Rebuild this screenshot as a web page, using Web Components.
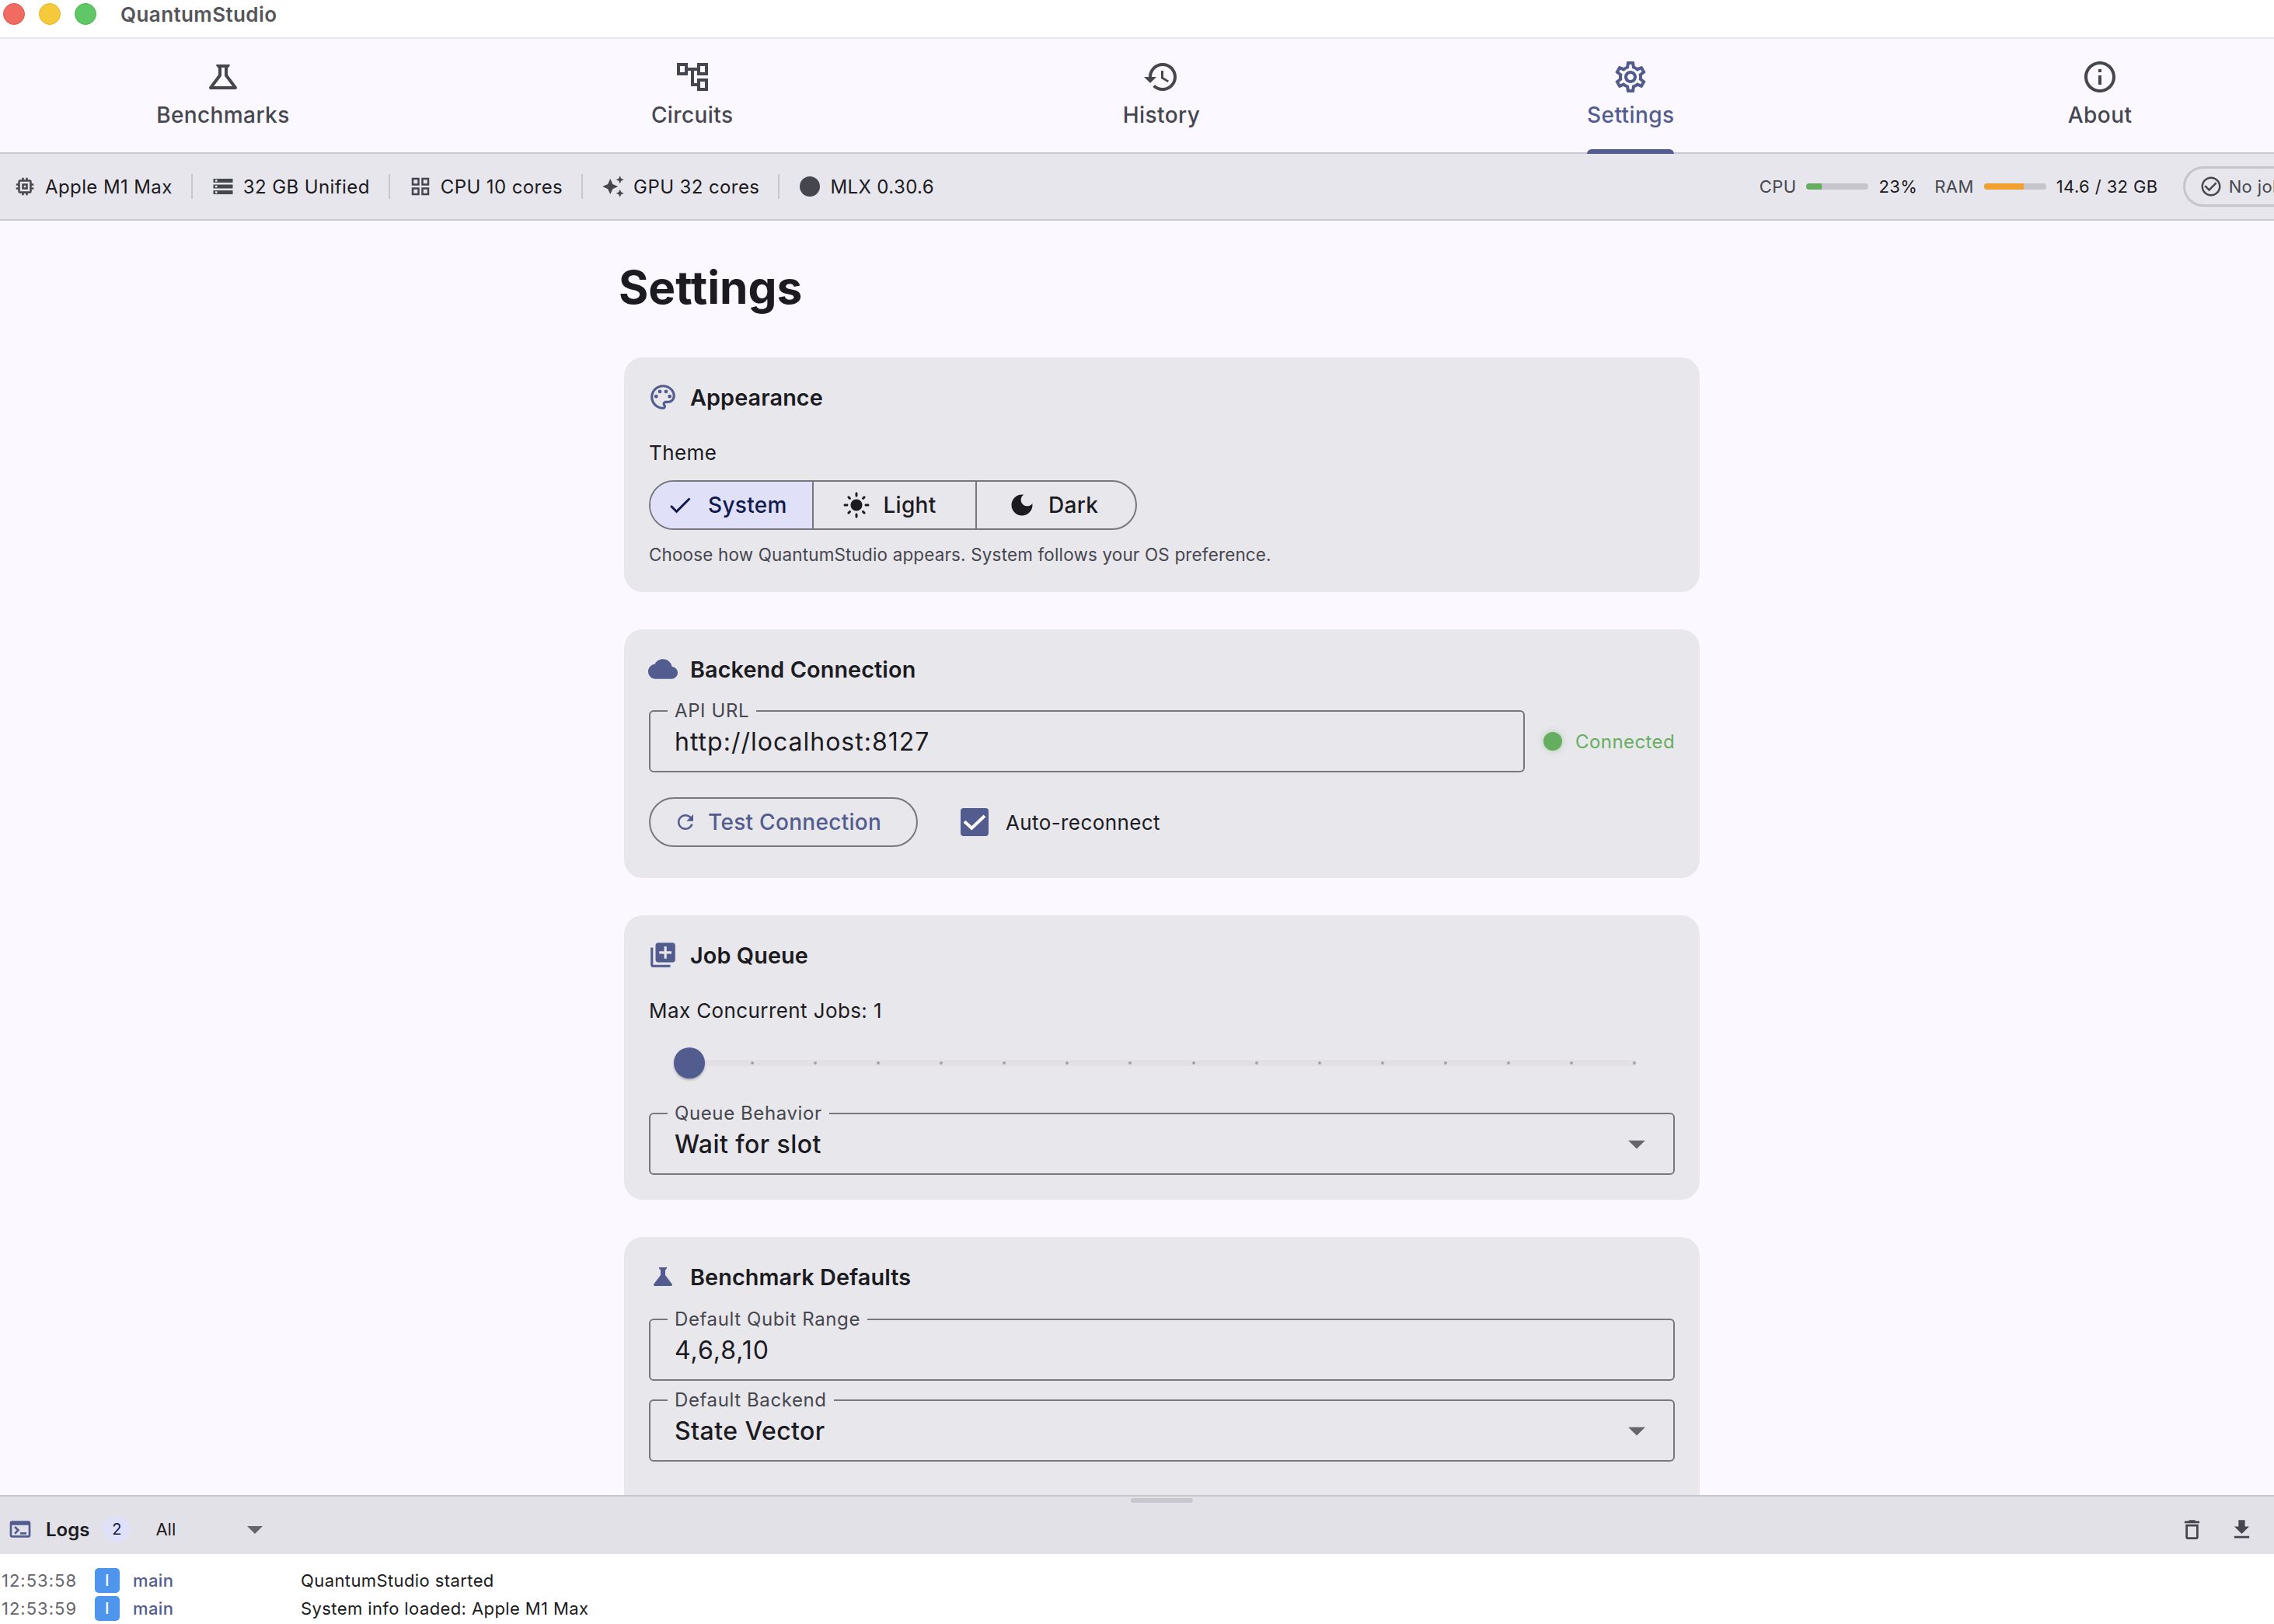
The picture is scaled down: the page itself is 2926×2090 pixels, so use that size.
<!DOCTYPE html>
<html>
<head>
<meta charset="utf-8">
<title>QuantumStudio</title>
<style>
  html, body { margin: 0; height: 100%; overflow: hidden; background: #fbf8ff; }
  body { font-family: Inter, "Liberation Sans", sans-serif; color: #1b1b21; }
</style>
</head>
<body>
<q-app></q-app>

<template id="app-template">
  <style>
    :host { display: flex; flex-direction: column; width: 100vw; height: 100vh; overflow: hidden; background: #fbf8ff; }
    main { flex: 1; min-height: 0; overflow: hidden; margin: 0 -78px 0 -14px; }
    .column { width: 1384px; margin: 0 auto; padding-top: 52px; display: flex; flex-direction: column; gap: 48px; }
    h1 { margin: 0 0 8px -7px; font-size: 58.6px; line-height: 68px; font-weight: 700; color: #1b1b21; }
    .label { font-size: 26px; line-height: 36px; margin-top: 31px; letter-spacing: .4px; }
    .hint { font-size: 22.4px; line-height: 30px; margin: 17px 0 1px; color: #46464f; letter-spacing: .2px; }
    .mt17 { margin-top: 17px; }
    .url-row { display: flex; align-items: center; margin-top: 30px; }
    .url-row q-field { flex: 1; }
    .status { display: flex; align-items: center; gap: 17px; margin-left: 24px; font-size: 24px; letter-spacing: .4px; color: #66ae5f; }
    .dot { width: 24px; height: 24px; border-radius: 50%; background: #66ae5f; box-shadow: 0 0 8px rgba(102,174,95,.45); }
    .btn-row { display: flex; align-items: center; gap: 55px; margin: 32px 0 8px; }
    .check-row { display: flex; align-items: center; gap: 22px; font-size: 26px; letter-spacing: .4px; }
    .box { width: 36px; height: 36px; border-radius: 4px; background: #525c8f; display: block; }
    .box svg { display: block; }
    .stack { display: flex; flex-direction: column; gap: 24px; margin-top: 31px; }
    .select-top { margin-top: 24px; }
    .long { padding-bottom: 120px; }
  </style>
  <q-titlebar>QuantumStudio</q-titlebar>
  <q-nav>
    <q-tab icon="science">Benchmarks</q-tab>
    <q-tab icon="tree">Circuits</q-tab>
    <q-tab icon="history">History</q-tab>
    <q-tab icon="settings" active>Settings</q-tab>
    <q-tab icon="info">About</q-tab>
  </q-nav>
  <q-statusbar></q-statusbar>
  <main>
    <div class="column">
      <div>
        <h1>Settings</h1>
      </div>
      <q-card icon="palette" heading="Appearance">
        <div class="label">Theme</div>
        <q-segments class="mt17"></q-segments>
        <div class="hint">Choose how QuantumStudio appears. System follows your OS preference.</div>
      </q-card>
      <q-card icon="cloud" heading="Backend Connection">
        <div class="url-row">
          <q-field label="API URL" light>http://localhost:8127</q-field>
          <div class="status"><span class="dot"></span><span>Connected</span></div>
        </div>
        <div class="btn-row">
          <q-button icon="refresh">Test Connection</q-button>
          <div class="check-row">
            <span class="box"><svg width="36" height="36" viewBox="0 0 36 36"><path d="M5 17.3L14.3 25.7L31 10" fill="none" stroke="#fff" stroke-width="4"/></svg></span>
            <span>Auto-reconnect</span>
          </div>
        </div>
      </q-card>
      <q-card icon="queue" heading="Job Queue">
        <div class="label">Max Concurrent Jobs: 1</div>
        <q-slider></q-slider>
        <q-field class="select-top" label="Queue Behavior" select>Wait for slot</q-field>
      </q-card>
      <q-card class="long" icon="scienceFill" icon-size="36" heading="Benchmark Defaults">
        <div class="stack">
          <q-field label="Default Qubit Range" light>4,6,8,10</q-field>
          <q-field label="Default Backend" select>State Vector</q-field>
        </div>
      </q-card>
    </div>
  </main>
  <q-logs></q-logs>
</template>

<template id="statusbar-template">
  <style>
    :host { display: flex; flex: none; align-items: center; box-sizing: border-box; height: 86px; padding-left: 17px; background: #e7e6ec; border-bottom: 2px solid #c8c6ce; font-size: 24px; letter-spacing: .4px; color: #1b1b21; white-space: nowrap; overflow: hidden; }
    .item { display: flex; align-items: center; gap: 11px; }
    .sep { width: 2px; height: 32px; background: #c8c6ce; margin: 0 24px; flex: none; }
    .dot { width: 26px; height: 26px; border-radius: 50%; background: #46464f; margin: 0 2px; }
    .right { margin-left: auto; display: flex; align-items: center; margin-right: -47px; font-size: 22px; color: #46464f; }
    .bar { width: 80px; height: 8px; border-radius: 4px; background: #c6c5ce; overflow: hidden; display: block; }
    .bar i { display: block; height: 100%; }
    .meter { display: flex; align-items: center; gap: 13px; margin-right: 24px; }
    .meter.first { margin-right: 22px; }
    .val { color: #1b1b21; }
    .chip { display: flex; align-items: center; gap: 8px; height: 52px; box-sizing: border-box; border: 3px solid #c6c5ce; border-radius: 26px; padding: 0 20px 0 18px; margin-left: 8px; }
  </style>
  <div class="item"><q-icon name="memory" size="30" color="#46464f"></q-icon><span>Apple M1 Max</span></div>
  <span class="sep"></span>
  <div class="item"><q-icon name="storage" size="30" color="#46464f"></q-icon><span>32 GB Unified</span></div>
  <span class="sep"></span>
  <div class="item"><q-icon name="grid" size="30" color="#46464f"></q-icon><span>CPU 10 cores</span></div>
  <span class="sep"></span>
  <div class="item"><q-icon name="spark" size="30" color="#46464f"></q-icon><span>GPU 32 cores</span></div>
  <span class="sep"></span>
  <div class="item"><span class="dot"></span><span>MLX 0.30.6</span></div>
  <div class="right">
    <div class="meter first"><span>CPU</span><span class="bar"><i style="width:24%;background:#66ae5f"></i></span><span class="val">23%</span></div>
    <div class="meter"><span>RAM</span><span class="bar"><i style="width:64%;background:#f0a030"></i></span><span class="val">14.6 / 32 GB</span></div>
    <div class="chip"><q-icon name="checkCircle" size="30" color="#46464f"></q-icon><span>No jobs</span></div>
  </div>
</template>

<template id="logs-template">
  <style>
    :host { display: block; flex: none; position: relative; height: 166px; box-sizing: border-box; border-top: 2px solid #c8c6ce; background: #fff; overflow: hidden; }
    .handle { position: absolute; top: 2px; left: 1455px; width: 80px; height: 6px; border-radius: 3px; background: #c8c6ce; }
    header { display: flex; align-items: center; box-sizing: border-box; height: 74px; padding: 10px 0 0 10px; background: #e3e1e8; }
    .title { font-size: 24px; font-weight: 600; margin-left: 17px; }
    .badge { width: 36px; height: 36px; border-radius: 50%; background: #e0e1f9; color: #111a4e; font-size: 20px; display: flex; align-items: center; justify-content: center; margin-left: 17px; }
    .all { font-size: 22px; margin-left: 32px; width: 104px; }
    .tools { margin-left: auto; margin-right: 25px; display: flex; gap: 31px; }
    .rows { padding-top: 16px; }
  </style>
  <div class="handle"></div>
  <header>
    <q-icon name="terminal" size="32" color="#525c8f"></q-icon>
    <span class="title">Logs</span>
    <span class="badge">2</span>
    <span class="all">All</span>
    <q-icon name="arrow" size="48" color="#66656c"></q-icon>
    <div class="tools">
      <q-icon name="trash" size="33" color="#46464f"></q-icon>
      <q-icon name="download" size="33" color="#46464f"></q-icon>
    </div>
  </header>
  <div class="rows">
    <q-logrow time="12:53:58" source="main">QuantumStudio started</q-logrow>
    <q-logrow time="12:53:59" source="main">System info loaded: Apple M1 Max</q-logrow>
  </div>
</template>

<script>
const ICONS = {
  science: 'M13 11.33L18 18H6l5-6.67V6h2m2.96-2H8.04c-.42 0-.65.48-.39.81L9 6.5v4.17L3.2 18.4c-.49.66-.02 1.6.8 1.6h16c.82 0 1.29-.94.8-1.6L15 10.67V6.5l1.35-1.69c.26-.33.03-.81-.39-.81z',
  scienceFill: 'M19.8 18.4L14 10.67V6.5l1.35-1.69c.26-.33.03-.81-.39-.81H9.04c-.42 0-.65.48-.39.81L10 6.5v4.17L4.2 18.4c-.49.66-.02 1.6.8 1.6h14c.82 0 1.29-.94.8-1.6z',
  tree: 'M22 11V3h-7v3H9V3H2v8h7V8h2v10h4v3h7v-8h-7v3h-2V8h2v3h7zM7 9H4V5h3v4zm10 6h3v4h-3v-4zm0-10h3v4h-3V5z',
  history: 'M13 3c-4.97 0-9 4.03-9 9H1l3.89 3.89.07.14L9 12H6c0-3.87 3.13-7 7-7s7 3.13 7 7-3.13 7-7 7c-1.93 0-3.68-.79-4.94-2.06l-1.42 1.42C8.27 19.99 10.51 21 13 21c4.97 0 9-4.03 9-9s-4.03-9-9-9zm-1 5v5l4.28 2.54.72-1.21-3.5-2.08V8H12z',
  settings: 'M19.43 12.98c.04-.32.07-.64.07-.98 0-.34-.03-.66-.07-.98l2.11-1.65c.19-.15.24-.42.12-.64l-2-3.46c-.09-.16-.26-.25-.44-.25-.06 0-.12.01-.17.03l-2.49 1c-.52-.4-1.08-.73-1.69-.98l-.38-2.65C14.46 2.18 14.25 2 14 2h-4c-.25 0-.46.18-.49.42l-.38 2.65c-.61.25-1.17.59-1.69.98l-2.49-1c-.06-.02-.12-.03-.18-.03-.17 0-.34.09-.43.25l-2 3.46c-.13.22-.07.49.12.64l2.11 1.65c-.04.32-.07.65-.07.98 0 .33.03.66.07.98l-2.11 1.65c-.19.15-.24.42-.12.64l2 3.46c.09.16.26.25.44.25.06 0 .12-.01.17-.03l2.49-1c.52.4 1.08.73 1.69.98l.38 2.65c.03.24.24.42.49.42h4c.25 0 .46-.18.49-.42l.38-2.65c.61-.25 1.17-.59 1.69-.98l2.49 1c.06.02.12.03.18.03.17 0 .34-.09.43-.25l2-3.46c.12-.22.07-.49-.12-.64l-2.11-1.65zm-1.98-1.71c.04.31.05.52.05.73 0 .21-.02.43-.05.73l-.14 1.13.89.7 1.08.84-.7 1.21-1.27-.51-1.04-.42-.9.68c-.43.32-.84.56-1.25.73l-1.06.43-.16 1.13-.2 1.35h-1.4l-.19-1.35-.16-1.13-1.06-.43c-.43-.18-.83-.41-1.23-.71l-.91-.7-1.06.43-1.27.51-.7-1.21 1.08-.84.89-.7-.14-1.13c-.03-.31-.05-.54-.05-.74s.02-.43.05-.73l.14-1.13-.89-.7-1.08-.84.7-1.21 1.27.51 1.04.42.9-.68c.43-.32.84-.56 1.25-.73l1.06-.43.16-1.13.2-1.35h1.39l.19 1.35.16 1.13 1.06.43c.43.18.83.41 1.23.71l.91.7 1.06-.43 1.27-.51.7 1.21-1.07.85-.89.7.14 1.13zM12 8c-2.21 0-4 1.79-4 4s1.79 4 4 4 4-1.79 4-4-1.79-4-4-4zm0 6c-1.1 0-2-.9-2-2s.9-2 2-2 2 .9 2 2-.9 2-2 2z',
  info: 'M11 7h2v2h-2zm0 4h2v6h-2zm1-9C6.48 2 2 6.48 2 12s4.48 10 10 10 10-4.48 10-10S17.52 2 12 2zm0 18c-4.41 0-8-3.59-8-8s3.59-8 8-8 8 3.59 8 8-3.59 8-8 8z',
  memory: 'M15 9H9v6h6V9zm-2 4h-2v-2h2v2zm8-2V9h-2V7c0-1.1-.9-2-2-2h-2V3h-2v2h-2V3H9v2H7c-1.1 0-2 .9-2 2v2H3v2h2v2H3v2h2v2c0 1.1.9 2 2 2h2v2h2v-2h2v2h2v-2h2c1.1 0 2-.9 2-2v-2h2v-2h-2v-2h2zm-4 6H7V7h10v10z',
  storage: 'M2 20h20v-4H2v4zm2-3h2v2H4v-2zM2 4v4h20V4H2zm4 3H4V5h2v2zm-4 7h20v-4H2v4zm2-3h2v2H4v-2z',
  grid: 'M3 3v8h8V3H3zm6 6H5V5h4v4zm-6 4v8h8v-8H3zm6 6H5v-4h4v4zm4-16v8h8V3h-8zm6 6h-4V5h4v4zm-6 4v8h8v-8h-8zm6 6h-4v-4h4v4z',
  spark: 'M19 9l1.25-2.75L23 5l-2.75-1.25L19 1l-1.25 2.75L15 5l2.75 1.25L19 9zm-7.5.5L9 4 6.5 9.5 1 12l5.5 2.5L9 20l2.5-5.5L17 12l-5.5-2.5zM19 15l-1.25 2.75L15 19l2.75 1.25L19 23l1.25-2.75L23 19l-2.75-1.25L19 15z',
  checkCircle: 'M16.59 7.58L10 14.17l-3.59-3.58L5 12l5 5 8-8zM12 2C6.48 2 2 6.48 2 12s4.48 10 10 10 10-4.48 10-10S17.52 2 12 2zm0 18c-4.42 0-8-3.58-8-8s3.58-8 8-8 8 3.58 8 8-3.58 8-8 8z',
  palette: 'M12 22C6.49 22 2 17.51 2 12S6.49 2 12 2s10 4.04 10 9c0 3.31-2.69 6-6 6h-1.77c-.28 0-.5.22-.5.5 0 .12.05.23.13.33.41.47.64 1.06.64 1.67 0 1.38-1.12 2.5-2.5 2.5zm0-18c-4.41 0-8 3.59-8 8s3.59 8 8 8c.28 0 .5-.22.5-.5 0-.16-.08-.28-.14-.35-.41-.46-.63-1.05-.63-1.65 0-1.38 1.12-2.5 2.5-2.5H16c2.21 0 4-1.79 4-4 0-3.86-3.59-7-8-7zM6.5 10a1.5 1.5 0 1 0 0 3 1.5 1.5 0 0 0 0-3zm3-4a1.5 1.5 0 1 0 0 3 1.5 1.5 0 0 0 0-3zm5 0a1.5 1.5 0 1 0 0 3 1.5 1.5 0 0 0 0-3zm3 4a1.5 1.5 0 1 0 0 3 1.5 1.5 0 0 0 0-3z',
  check: 'M9 16.17L4.83 12l-1.42 1.41L9 19 21 7l-1.41-1.41z',
  sun: 'M12 7c-2.76 0-5 2.24-5 5s2.24 5 5 5 5-2.24 5-5-2.24-5-5-5zM2 13h2c.55 0 1-.45 1-1s-.45-1-1-1H2c-.55 0-1 .45-1 1s.45 1 1 1zm18 0h2c.55 0 1-.45 1-1s-.45-1-1-1h-2c-.55 0-1 .45-1 1s.45 1 1 1zM11 2v2c0 .55.45 1 1 1s1-.45 1-1V2c0-.55-.45-1-1-1s-1 .45-1 1zm0 18v2c0 .55.45 1 1 1s1-.45 1-1v-2c0-.55-.45-1-1-1s-1 .45-1 1zM5.99 4.58c-.39-.39-1.03-.39-1.41 0-.39.39-.39 1.03 0 1.41l1.06 1.06c.39.39 1.03.39 1.41 0s.39-1.03 0-1.41L5.99 4.58zm12.37 12.37c-.39-.39-1.03-.39-1.41 0-.39.39-.39 1.03 0 1.41l1.06 1.06c.39.39 1.03.39 1.41 0 .39-.39.39-1.03 0-1.41l-1.06-1.06zm1.06-10.96c.39-.39.39-1.03 0-1.41-.39-.39-1.03-.39-1.41 0l-1.06 1.06c-.39.39-.39 1.03 0 1.41s1.03.39 1.41 0l1.06-1.06zM7.05 18.36c.39-.39.39-1.03 0-1.41-.39-.39-1.03-.39-1.41 0l-1.06 1.06c-.39.39-.39 1.03 0 1.41s1.03.39 1.41 0l1.06-1.06z',
  moon: 'M12 3c-4.97 0-9 4.03-9 9s4.03 9 9 9 9-4.03 9-9c0-.46-.04-.92-.1-1.36-.98 1.37-2.58 2.26-4.4 2.26-2.98 0-5.4-2.42-5.4-5.4 0-1.81.89-3.42 2.26-4.4-.44-.06-.9-.1-1.36-.1z',
  cloud: 'M19.35 10.04C18.67 6.59 15.64 4 12 4 9.11 4 6.6 5.64 5.35 8.04 2.34 8.36 0 10.91 0 14c0 3.31 2.69 6 6 6h13c2.76 0 5-2.24 5-5 0-2.64-2.05-4.78-4.65-4.96z',
  refresh: 'M17.65 6.35C16.2 4.9 14.21 4 12 4c-4.42 0-7.99 3.58-7.99 8s3.57 8 7.99 8c3.73 0 6.84-2.55 7.73-6h-2.08c-.82 2.33-3.04 4-5.65 4-3.31 0-6-2.69-6-6s2.69-6 6-6c1.66 0 3.14.69 4.22 1.78L13 11h7V4l-2.35 2.35z',
  queue: 'M4 6H2v14c0 1.1.9 2 2 2h14v-2H4V6zm16-4H8c-1.1 0-2 .9-2 2v12c0 1.1.9 2 2 2h12c1.1 0 2-.9 2-2V4c0-1.1-.9-2-2-2zm-1 9h-4v4h-2v-4H9V9h4V5h2v4h4v2z',
  terminal: 'M20 4H4c-1.1 0-2 .9-2 2v12c0 1.1.9 2 2 2h16c1.1 0 2-.9 2-2V6c0-1.1-.9-2-2-2zm0 14H4V8h16v10zm-2-1h-6v-2h6v2zM7.5 17l-1.41-1.41L8.67 13l-2.59-2.59L7.5 9l4 4-4 4z',
  trash: 'M6 19c0 1.1.9 2 2 2h8c1.1 0 2-.9 2-2V7H6v12zM8 9h8v10H8V9zm7.5-5l-1-1h-5l-1 1H5v2h14V4z',
  download: 'M19 9h-4V3H9v6H5l7 7 7-7zM5 18v2h14v-2H5z',
  arrow: 'M7 10l5 5 5-5z'
};

// small helper, every element here just stamps html into an open shadow root
class Base extends HTMLElement {
  constructor() {
    super();
    this.attachShadow({ mode: 'open' });
  }
  stamp(id) {
    this.shadowRoot.appendChild(document.importNode(document.querySelector(id).content, true));
  }
}

class QIcon extends Base {
  connectedCallback() {
    const size = this.getAttribute('size') || 24;
    const color = this.getAttribute('color') || 'currentColor';
    this.shadowRoot.innerHTML = `<style>:host{display:inline-flex;flex:none;line-height:0}</style>
      <svg width="${size}" height="${size}" viewBox="0 0 24 24" fill="${color}"><path d="${ICONS[this.getAttribute('name')]}"/></svg>`;
  }
}

class QApp extends Base {
  connectedCallback() { this.stamp('#app-template'); }
}

class QTitlebar extends Base {
  connectedCallback() {
    this.shadowRoot.innerHTML = `<style>
      :host { display: flex; flex: none; align-items: center; box-sizing: border-box; height: 50px; padding: 0 0 12px 4px; background: #fff; border-bottom: 2px solid #e6e4ea; }
      i { width: 28px; height: 28px; border-radius: 50%; margin-right: 18px; box-sizing: border-box; }
      span { margin-left: 13px; font-size: 26px; font-weight: 600; color: #55555a; letter-spacing: .4px; }
    </style>
    <i style="background:#f26b63;border:1px solid #e0554d"></i><i style="background:#f4ca3a;border:1px solid #e2b62a"></i><i style="background:#5fc766;border:1px solid #4cb354"></i><span><slot></slot></span>`;
  }
}

class QNav extends Base {
  connectedCallback() {
    this.shadowRoot.innerHTML = `<style>
      :host { display: block; flex: none; height: 148px; box-sizing: border-box; background: #fbf8ff; border-bottom: 2px solid #c8c6ce; }
      .tabs { display: grid; grid-template-columns: repeat(5, 1fr); margin: 0 -78px 0 -15px; height: 148px; }
    </style><div class="tabs"><slot></slot></div>`;
  }
}

class QTab extends Base {
  connectedCallback() {
    const on = this.hasAttribute('active');
    const color = on ? '#525c8f' : '#46464f';
    this.shadowRoot.innerHTML = `<style>
      :host { display: flex; justify-content: center; height: 148px; }
      .inner { display: flex; flex-direction: column; align-items: center; height: 148px; }
      q-icon { margin-top: 25px; }
      .text { margin-top: 7px; font-size: 28px; line-height: 36px; font-weight: 500; letter-spacing: .4px; color: ${color}; }
      .ind { margin-top: auto; align-self: stretch; height: 6px; border-radius: 6px 6px 0 0; background: ${on ? '#525c8f' : 'transparent'}; }
    </style>
    <div class="inner"><q-icon name="${this.getAttribute('icon')}" size="48" color="${color}"></q-icon>
    <div class="text"><slot></slot></div><div class="ind"></div></div>`;
  }
}

class QStatusbar extends Base {
  connectedCallback() { this.stamp('#statusbar-template'); }
}

class QCard extends Base {
  connectedCallback() {
    this.shadowRoot.innerHTML = `<style>
      :host { display: block; background: #e8e7ec; border-radius: 24px; padding: 32px; }
      .head { display: flex; align-items: center; gap: 15px; box-sizing: border-box; height: 42px; padding-bottom: 4px; font-size: 28.8px; font-weight: 600; letter-spacing: .1px; color: #1b1b21; }
      .ic { width: 40px; height: 40px; margin-left: -2px; display: flex; align-items: center; justify-content: center; }
    </style>
    <div class="head"><span class="ic"><q-icon name="${this.getAttribute('icon')}" size="${this.getAttribute('icon-size') || 38}" color="#525c8f"></q-icon></span><span>${this.getAttribute('heading')}</span></div>
    <slot></slot>`;
  }
}

class QSegments extends Base {
  connectedCallback() {
    this.shadowRoot.innerHTML = `<style>
      :host { display: inline-flex; vertical-align: top; box-sizing: border-box; width: 628px; height: 64px; border: 2px solid #78767f; border-radius: 32px; overflow: hidden; font-size: 28px; font-weight: 500; letter-spacing: .3px; color: #1b1b21; }
      div { flex: 1; box-sizing: border-box; display: flex; align-items: center; justify-content: center; gap: 16px; }
      div + div { border-left: 2px solid #78767f; }
      .on { background: #e0e1f9; color: #111a4e; gap: 18px; padding-right: 12px; }
    </style>
    <div class="on"><q-icon name="check" size="36" color="#111a4e"></q-icon>System</div>
    <div style="padding-right:13px"><q-icon name="sun" size="36" color="#1b1b21"></q-icon>Light</div>
    <div style="padding-right:8px"><q-icon name="moon" size="36" color="#1b1b21"></q-icon>Dark</div>`;
  }
}

class QField extends Base {
  connectedCallback() {
    const select = this.hasAttribute('select');
    this.shadowRoot.innerHTML = `<style>
      :host { display: block; position: relative; box-sizing: border-box; height: 80px; border: 2px solid #78767f; border-radius: 6px; }
      label { position: absolute; left: 22px; top: -14px; padding: 0 9px; background: #e8e7ec; font-size: 24px; line-height: 26px; letter-spacing: .6px; color: #46464f; }
      .value { display: flex; align-items: center; justify-content: space-between; height: 76px; padding: 0 21px 0 31px; font-size: 32px; letter-spacing: ${select ? .45 : 1}px; color: #1b1b21; font-weight: ${select ? 500 : 400}; }
    </style>
    <label>${this.getAttribute('label')}</label>
    <div class="value"><span><slot></slot></span>${select ? '<q-icon name="arrow" size="52" color="#66656c"></q-icon>' : ''}</div>`;
  }
}

class QButton extends Base {
  connectedCallback() {
    this.shadowRoot.innerHTML = `<style>
      :host { display: inline-flex; align-items: center; box-sizing: border-box; height: 64px; width: 346px; padding-left: 30px; gap: 14px; border: 2px solid #78767f; border-radius: 32px; font-size: 28px; font-weight: 500; letter-spacing: .3px; color: #525c8f; }
    </style><q-icon name="${this.getAttribute('icon')}" size="30" color="#525c8f"></q-icon><slot></slot>`;
  }
}

class QSlider extends Base {
  connectedCallback() {
    const dots = Array.from({ length: 16 }, () => '<i></i>').join('');
    this.shadowRoot.innerHTML = `<style>
      :host { display: block; position: relative; height: 80px; margin-top: 9px; }
      .track { position: absolute; left: 50px; right: 50px; top: 36px; height: 8px; display: flex; align-items: center; justify-content: space-between; background: #e2e0e6; }
      i { width: 4px; height: 4px; border-radius: 50%; background: #a5a3ac; }
      .thumb { position: absolute; left: 32px; top: 20px; width: 40px; height: 40px; border-radius: 50%; background: #525c8f; box-shadow: 0 2px 3px rgba(0,0,0,.25); }
    </style><div class="track">${dots}</div><div class="thumb"></div>`;
  }
}

class QLogs extends Base {
  connectedCallback() { this.stamp('#logs-template'); }
}

class QLogrow extends Base {
  connectedCallback() {
    this.shadowRoot.innerHTML = `<style>
      :host { display: grid; grid-template-columns: 120px 49px 216px 1fr; align-items: center; height: 36px; padding-left: 2px; font-size: 22px; letter-spacing: .4px; color: #1b1b21; }
      .t { color: #66656c; letter-spacing: 1px; }
      .lv { width: 32px; height: 32px; border-radius: 5px; background: #4e95ee; color: #fff; font-size: 20px; font-weight: 500; display: flex; align-items: center; justify-content: center; }
      .s { color: #525c8f; font-weight: 500; }
    </style>
    <span class="t">${this.getAttribute('time')}</span><span class="lv">I</span><span class="s">${this.getAttribute('source')}</span><span><slot></slot></span>`;
  }
}

customElements.define('q-icon', QIcon);
customElements.define('q-titlebar', QTitlebar);
customElements.define('q-nav', QNav);
customElements.define('q-tab', QTab);
customElements.define('q-statusbar', QStatusbar);
customElements.define('q-card', QCard);
customElements.define('q-segments', QSegments);
customElements.define('q-field', QField);
customElements.define('q-button', QButton);
customElements.define('q-slider', QSlider);
customElements.define('q-logs', QLogs);
customElements.define('q-logrow', QLogrow);
customElements.define('q-app', QApp);
</script>
</body>
</html>
